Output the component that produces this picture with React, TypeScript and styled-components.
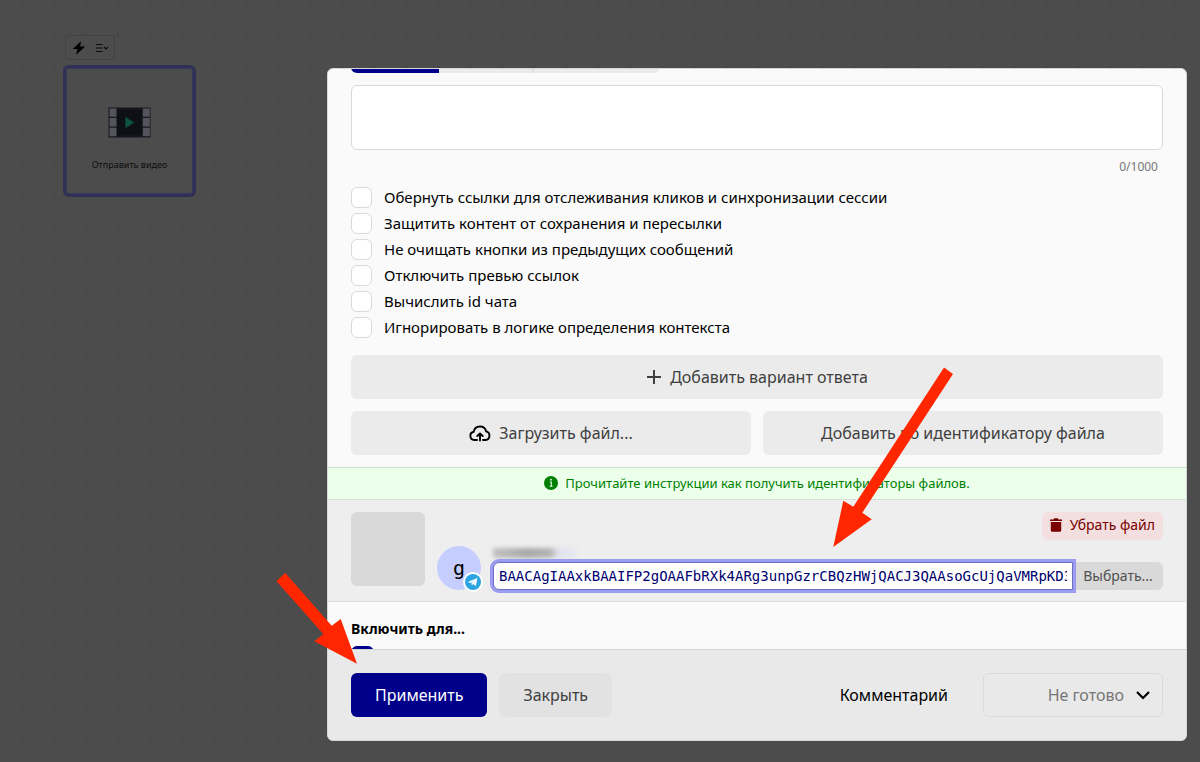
import React from 'react';
import styled, { createGlobalStyle, css } from 'styled-components';

const GlobalStyle = createGlobalStyle`
  *, *::before, *::after { box-sizing: border-box; }
  body {
    margin: 0;
    background: #4c4c4c;
    color: #000;
    font-family: 'Noto Sans', 'Open Sans', sans-serif;
    font-size: 15px;
  }
  button, input, select, textarea { font: inherit; color: inherit; margin: 0; }
`;

const Canvas = styled.div`
  position: relative;
  min-height: 100vh;
  padding: 68px 13px 20px;
  display: flex;
  justify-content: flex-end;
  align-items: flex-start;
  background: #4c4c4c radial-gradient(circle at 16px 16px, #424242 1px, transparent 1px) 6px -13px / 32px 32px;
`;

const NodeTools = styled.div`
  position: absolute;
  left: 65px;
  top: 35px;
  width: 50px;
  height: 25px;
  display: flex;
  align-items: center;
  justify-content: center;
  gap: 9px;
  border: 1px solid #434343;
  border-radius: 3px;
  background: #4c4c4c;
`;

const ToolButton = styled.button`
  display: flex;
  padding: 0;
  border: 0;
  background: none;
`;

const NodeCard = styled.div`
  position: absolute;
  left: 63px;
  top: 65px;
  width: 133px;
  height: 132px;
  padding-top: 39px;
  display: flex;
  flex-direction: column;
  align-items: center;
  gap: 20px;
  border: 3px solid #303055;
  box-shadow: inset 0 0 0 1px #38385c;
  border-radius: 6px;
  background: #4c4c4c;
`;

const NodeLabel = styled.span`
  font-size: 9px;
  line-height: 14px;
  color: #0c0c0c;
`;

const Dialog = styled.section`
  position: relative;
  width: 100%;
  max-width: 860px;
  border: 1px solid #d6d6d6;
  border-radius: 6px;
  background: #fafafa;
`;

const Tabs = styled.div`
  height: 4px;
  margin: 0 23px;
  display: flex;
  align-items: flex-end;
  overflow: hidden;
`;

const Tab = styled.div<{ $width: number; $active?: boolean }>`
  width: ${(p) => p.$width}px;
  height: 44px;
  background: ${(p) => (p.$active ? '#00008b' : '#ebebeb')};
  &:first-child { border-radius: 6px 0 0 6px; }
  &:last-child { border-left: 2px solid #dedede; border-radius: 0 6px 6px 0; }
`;

const Form = styled.div`
  padding: 12px 23px;
  display: flex;
  flex-direction: column;
`;

const Message = styled.textarea`
  display: block;
  width: 100%;
  height: 65px;
  padding: 8px;
  border: 1px solid #d9d9d9;
  border-radius: 6px;
  background: #fff;
  resize: none;
`;

const Counter = styled.span`
  align-self: flex-end;
  margin: 8px 5px;
  font-size: 12px;
  line-height: 18px;
  color: #777;
`;

const Option = styled.label`
  height: 26px;
  display: flex;
  align-items: center;
  gap: 12px;
  line-height: 26px;
`;

const Check = styled.input.attrs({ type: 'checkbox' })`
  appearance: none;
  flex: none;
  width: 21px;
  height: 21px;
  border: 1px solid #d9d9d9;
  border-radius: 6px;
  background: #fff;
  &:checked { background: #00008b; border-color: #00008b; }
`;

const Actions = styled.div`
  margin-top: 15px;
  display: grid;
  grid-template-columns: 1fr 1fr;
  gap: 12px;
`;

const looks = {
  plain: css`background: #ebebeb; color: #404040;`,
  primary: css`background: #00008b; color: #fff;`,
  muted: css`background: #e2e2e2; color: #404040;`,
  bare: css`background: none; color: #000; padding: 0;`,
};

const Button = styled.button<{ $look?: keyof typeof looks; $wide?: boolean }>`
  height: 44px;
  padding: 0 24px;
  display: flex;
  align-items: center;
  justify-content: center;
  gap: 8px;
  border: 0;
  border-radius: 6px;
  font-size: 16px;
  line-height: 24px;
  white-space: nowrap;
  ${(p) => looks[p.$look || 'plain']}
  ${(p) => p.$wide && css`grid-column: 1 / -1;`}
`;

const Notice = styled.div`
  height: 33px;
  padding-bottom: 2px;
  display: flex;
  align-items: center;
  justify-content: center;
  gap: 7px;
  border-top: 1px solid #cfdfcf;
  border-bottom: 1px solid #d9dfd9;
  background: #ebffeb;
`;

const NoticeLink = styled.a`
  font-size: 13px;
  line-height: 20px;
  color: #008000;
  text-decoration: none;
`;

const FilePanel = styled.div`
  padding: 12px 23px 11px;
  display: flex;
  gap: 12px;
  border-bottom: 1px solid #dcdcdc;
  background: #eee;
`;

const Thumb = styled.div`
  flex: none;
  width: 74px;
  height: 74px;
  border-radius: 6px;
  background: #d9d9d9;
`;

const Avatar = styled.div`
  position: relative;
  align-self: flex-end;
  flex: none;
  width: 44px;
  height: 44px;
  border-radius: 50%;
  background: #c5ceff;
  font-family: 'DejaVu Sans Mono', monospace;
  font-size: 20px;
  line-height: 44px;
  text-align: center;
`;

const Badge = styled.svg`
  position: absolute;
  right: -2px;
  bottom: -2px;
`;

const FileFields = styled.div`
  flex: 1;
  min-width: 0;
  display: flex;
  flex-direction: column;
`;

const SmallButton = styled.button<{ $danger?: boolean }>`
  flex: none;
  height: 28px;
  display: flex;
  align-items: center;
  justify-content: center;
  border: 0;
  white-space: nowrap;
  line-height: 20px;
  ${(p) =>
    p.$danger
      ? css`
          align-self: flex-end;
          padding: 0 8px 2px;
          gap: 8px;
          border-radius: 6px;
          background: #f3dfdf;
          color: #7a0000;
          font-size: 14px;
        `
      : css`
          width: 90px;
          padding: 0;
          border-radius: 0 6px 6px 0;
          background: #d9d9d9;
          color: #505050;
          font-size: 14px;
        `}
`;

const HiddenName = styled.div`
  width: 84px;
  height: 10px;
  margin: 8px 0 4px;
  background: linear-gradient(90deg, #c2c2c2, #a8a8a8 40%, #b4b4b4 68%, #e2e2ee 78%, #e8e8f0);
  filter: blur(2px);
`;

const InputRow = styled.div`
  display: flex;
`;

const FileId = styled.input`
  position: relative;
  z-index: 1;
  flex: 1;
  min-width: 0;
  height: 28px;
  padding: 0 5px;
  border: 1px solid #6f6fc0;
  border-radius: 6px 0 0 6px;
  outline: 0;
  box-shadow: 0 0 0 3px #9b9bf0;
  background: #fff;
  color: #00006e;
  font-family: 'DejaVu Sans Mono', monospace;
  font-size: 14px;
`;

const EnableFor = styled.div`
  padding: 17px 23px 0;
`;

const SectionTitle = styled.h2`
  margin: 0;
  font-size: 14px;
  line-height: 20px;
  font-weight: 700;
`;

const CutOff = styled.div`
  height: 3px;
  margin-top: 7px;
  overflow: hidden;
  line-height: 0;
`;

const CutCheck = styled(Check)`
  width: 23px;
`;

const Footer = styled.footer`
  padding: 23px;
  display: flex;
  align-items: center;
  gap: 12px;
  border-top: 1px solid #d4d4d4;
  border-radius: 0 0 5px 5px;
  background: #e9e9e9;
`;

const FooterEnd = styled.div`
  margin-left: auto;
  display: flex;
  align-items: center;
  gap: 35px;
`;

const StatusBox = styled.div`
  position: relative;
  width: 180px;
`;

const Status = styled.select`
  appearance: none;
  display: block;
  width: 100%;
  height: 44px;
  padding: 0 38px 0 12px;
  border: 1px solid #dadada;
  border-radius: 6px;
  background: transparent;
  color: #777;
  font-size: 16px;
  text-align: right;
  text-align-last: right;
`;

const Chevron = styled.svg`
  position: absolute;
  right: 12px;
  top: 17px;
  pointer-events: none;
`;

const Pointers = styled.svg`
  position: absolute;
  z-index: 2;
  left: -58px;
  top: 291px;
  pointer-events: none;
`;

const options = [
  'Обернуть ссылки для отслеживания кликов и синхронизации сессии',
  'Защитить контент от сохранения и пересылки',
  'Не очищать кнопки из предыдущих сообщений',
  'Отключить превью ссылок',
  'Вычислить id чата',
  'Игнорировать в логике определения контекста',
];

export default function App() {
  return (
    <Canvas>
      <GlobalStyle />
      <NodeTools>
        <ToolButton aria-label="Триггер">
          <svg width="14" height="14" viewBox="0 0 14 14">
            <path d="M9 0.3 L0.8 8 H5.4 L4.2 13.7 L13.2 5.6 H8.2 Z" fill="#000" />
          </svg>
        </ToolButton>
        <ToolButton aria-label="Меню">
          <svg width="14" height="10" viewBox="0 0 14 10" fill="none" stroke="#0c0c0c" strokeWidth="1.2">
            <path d="M1 1.5h6.5M1 5h6.5M1 8.5h6.5M9 4l2 2 2-2" />
          </svg>
        </ToolButton>
      </NodeTools>
      <NodeCard>
        <svg width="43" height="31" viewBox="0 0 43 31">
          <rect x="0.5" y="0.5" width="42" height="30" rx="0.5" fill="#15151f" />
          <rect x="9" y="3" width="25" height="25" fill="#0f0f16" />
          <g fill="#54545c">
            <rect x="1.5" y="1.5" width="7" height="8.2" />
            <rect x="1.5" y="10.9" width="7" height="8.6" />
            <rect x="1.5" y="20.7" width="7" height="8.6" />
            <rect x="34.8" y="1.5" width="7" height="8.2" />
            <rect x="34.8" y="10.9" width="7" height="8.6" />
            <rect x="34.8" y="20.7" width="7" height="8.6" />
          </g>
          <path d="M17.5 10v11l8.5-5.5z" fill="#0f5440" stroke="#0b3a2e" strokeWidth="0.8" />
        </svg>
        <NodeLabel>Отправить видео</NodeLabel>
      </NodeCard>

      <Dialog>
        <Tabs>
          <Tab $width={88} $active />
          <Tab $width={93} />
          <Tab $width={128} />
        </Tabs>
        <Form>
          <Message aria-label="Текст сообщения" />
          <Counter>0/1000</Counter>
          {options.map((text) => (
            <Option key={text}>
              <Check />
              {text}
            </Option>
          ))}
          <Actions>
            <Button $wide>
              <svg width="16" height="16" viewBox="0 0 16 16" stroke="#404040" strokeWidth="2">
                <path d="M8 1v14M1 8h14" />
              </svg>
              Добавить вариант ответа
            </Button>
            <Button>
              <svg width="22" height="18" viewBox="0 0 22 18" fill="none" stroke="#000" strokeWidth="1.9" strokeLinecap="round" strokeLinejoin="round">
                <path d="M8 16H5.2A4.2 4.2 0 0 1 4.7 7.7 A6.4 6.4 0 0 1 17.2 7.4 A4.4 4.4 0 0 1 16.6 16H14" />
                <path d="M11 16.5V9.6M8.3 12L11 9.4L13.7 12" />
              </svg>
              Загрузить файл...
            </Button>
            <Button>Добавить по идентификатору файла</Button>
          </Actions>
        </Form>

        <Notice>
          <svg width="14" height="14" viewBox="0 0 14 14">
            <circle cx="7" cy="7" r="7" fill="#008000" />
            <circle cx="7" cy="3.7" r="0.9" fill="#eaffea" />
            <path d="M5.8 6h1.5v4M5.6 10.2h3" fill="none" stroke="#eaffea" strokeWidth="1.1" />
          </svg>
          <NoticeLink href="#">Прочитайте инструкции как получить идентификаторы файлов.</NoticeLink>
        </Notice>

        <FilePanel>
          <Thumb />
          <Avatar>
            g
            <Badge width="20" height="20" viewBox="0 0 20 20">
              <circle cx="10" cy="10" r="10" fill="#fff" />
              <circle cx="10" cy="10" r="8" fill="#2ba4e0" />
              <path d="M4.8 9.9L14.4 6.1L12.9 14L10.1 12L8.8 13.4L8.5 11.1L12.2 7.9L7.5 10.9Z" fill="#fff" />
            </Badge>
          </Avatar>
          <FileFields>
            <SmallButton $danger>
              <svg width="12" height="14" viewBox="0 0 12 14" fill="#7a0000">
                <path d="M0 1.4h3.4L4.2 0.2h3.6l.8 1.2H12v1.6H0z" />
                <path d="M0.8 4h10.4V12.4a1.4 1.4 0 0 1-1.4 1.4H2.2a1.4 1.4 0 0 1-1.4-1.4z" />
              </svg>
              Убрать файл
            </SmallButton>
            <HiddenName />
            <InputRow>
              <FileId
                aria-label="Идентификатор файла"
                defaultValue="BAACAgIAAxkBAAIFP2gOAAFbRXk4ARg3unpGzrCBQzHWjQACJ3QAAsoGcUjQaVMRpKD3"
              />
              <SmallButton>Выбрать...</SmallButton>
            </InputRow>
          </FileFields>
        </FilePanel>

        <EnableFor>
          <SectionTitle>Включить для...</SectionTitle>
          <CutOff>
            <CutCheck defaultChecked aria-label="Включить" />
          </CutOff>
        </EnableFor>

        <Footer>
          <Button $look="primary">Применить</Button>
          <Button $look="muted">Закрыть</Button>
          <FooterEnd>
            <Button $look="bare">Комментарий</Button>
            <StatusBox>
              <Status aria-label="Статус" defaultValue="no">
                <option value="no">Не готово</option>
              </Status>
              <Chevron width="16" height="11" viewBox="0 0 16 11" fill="none" stroke="#000" strokeWidth="2.2">
                <path d="M2 2l6 6 6-6" />
              </Chevron>
            </StatusBox>
          </FooterEnd>
        </Footer>

        <Pointers width="700" height="310" viewBox="270 360 700 310" fill="#ff2600">
          <path d="M944 367.5L953 374L862.3 512.7L871.7 519.3L833.3 547L843.3 500.7L853.3 506.7Z" />
          <path d="M285.3 573L331.7 625.7L340.7 619L357 663.7L314.3 641.3L323.3 634L276.3 581Z" />
        </Pointers>
      </Dialog>
    </Canvas>
  );
}
